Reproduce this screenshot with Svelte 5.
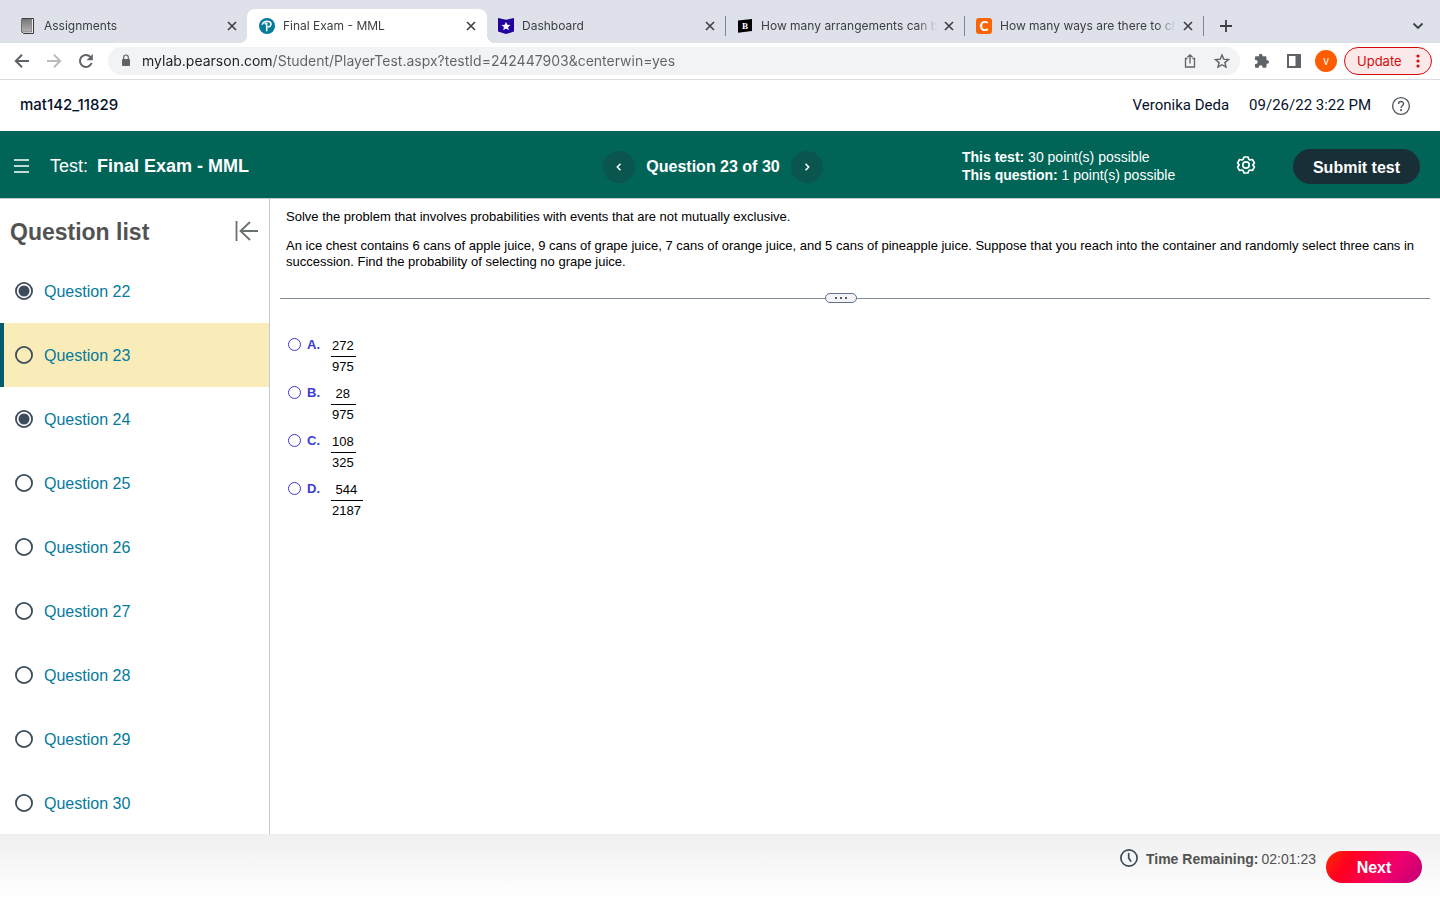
<script>
  const tabs = [
    { title: 'Assignments', icon: 'book' },
    { title: 'Final Exam - MML', icon: 'pearson' },
    { title: 'Dashboard', icon: 'star' },
    { title: 'How many arrangements can b', icon: 'b' },
    { title: 'How many ways are there to ch', icon: 'c' }
  ];
  const activeTab = 1;

  let url = 'mylab.pearson.com/Student/PlayerTest.aspx?testId=242447903&centerwin=yes';

  const questions = [22, 23, 24, 25, 26, 27, 28, 29, 30];
  const answered = [22, 24];
  let current = 23;

  const choices = [
    { letter: 'A', top: '272', bottom: '975' },
    { letter: 'B', top: '28', bottom: '975' },
    { letter: 'C', top: '108', bottom: '325' },
    { letter: 'D', top: '544', bottom: '2187' }
  ];
  let answer = '';

  function prev() {
    if (current > 22) current -= 1;
  }

  function next() {
    if (current < 30) current += 1;
  }
</script>

<div class="page">
  <div class="tabs">
    {#each tabs as tab, i}
      <div class="tab" class:active={i === activeTab} class:line={i > 1}>
        <svg class="favicon" width="16" height="16" viewBox="0 0 16 16">
          {#if tab.icon === 'book'}
            <defs>
              <linearGradient id="cover" x1="0" y1="0" x2="0" y2="1">
                <stop offset="0" stop-color="#777" />
                <stop offset="1" stop-color="#b5b2b0" />
              </linearGradient>
            </defs>
            <path d="M2 .5h11.500v15H3.500L1.500 13.500z" fill="#eee" stroke="#3c3636" />
            <path d="M1.500 1h10v13h-10z" fill="url(#cover)" stroke="#666" stroke-width=".6" />
          {:else if tab.icon === 'pearson'}
            <circle cx="8" cy="8" r="8" fill="#047a9c" />
            <path d="M3 6.800C4.200 4.300 7 3 9.500 3.500c3.600.8 3.300 5.400-.8 5.600M5.700 6.200c1-.7 2-.9 2-.9v7.900" fill="none" stroke="#fff" stroke-width="1.500" />
          {:else if tab.icon === 'star'}
            <path d="M0 0l8 1.800L16 0v13.500L8 16l-8-2.500z" fill="#24009c" />
            <path d="M8 3.800l1.300 2.900 3.200.3-2.400 2.100.7 3.100L8 10.600l-2.800 1.600.7-3.100L3.500 7l3.200-.3z" fill="#fff" />
          {:else if tab.icon === 'b'}
            <path d="M1 2.500L15 1v12L1 14.700z" fill="#000" />
            <text x="8" y="11" text-anchor="middle" font-family="Liberation Serif, serif" font-weight="bold" font-size="9" fill="#fff">B</text>
          {:else}
            <rect width="16" height="16" rx="3" fill="#fb6404" />
            <text x="8" y="12.500" text-anchor="middle" font-family="Lato, sans-serif" font-weight="900" font-size="13" fill="#fff">C</text>
          {/if}
        </svg>
        <a class="title" href="#tab">{tab.title}</a>
        <button class="icon" aria-label="Close tab">
          <svg width="16" height="16" viewBox="0 0 16 16"><path d="M4 4l8 8M12 4l-8 8" stroke="#3c4043" stroke-width="1.600" /></svg>
        </button>
      </div>
    {/each}
    <button class="icon new-tab" aria-label="New tab">
      <svg width="16" height="16" viewBox="0 0 16 16"><path d="M8 2v12M2 8h12" stroke="#3c4043" stroke-width="1.800" /></svg>
    </button>
    <button class="icon tab-search" aria-label="Search tabs">
      <svg width="16" height="16" viewBox="0 0 16 16"><path d="M3.500 5.500L8 10l4.500-4.500" fill="none" stroke="#3c4043" stroke-width="1.800" /></svg>
    </button>
  </div>

  <div class="toolbar">
    <div class="tools">
      <button class="icon" aria-label="Back">
        <svg width="16" height="16" viewBox="0 0 16 16"><path d="M15 8H2.500M8 1.700L1.800 8 8 14.300" fill="none" stroke="#5f6368" stroke-width="2" /></svg>
      </button>
      <button class="icon" aria-label="Forward">
        <svg width="16" height="16" viewBox="0 0 16 16"><path d="M1 8h12.500M8 1.700L14.200 8 8 14.300" fill="none" stroke="#babcbe" stroke-width="2" /></svg>
      </button>
      <button class="icon" aria-label="Reload">
        <svg width="16" height="16" viewBox="0 0 16 16"><path d="M13.600 10A6 6 0 1 1 12.400 3.900" fill="none" stroke="#5f6368" stroke-width="2" /><path d="M14.800 1v6.200H8.600z" fill="#5f6368" /></svg>
      </button>
    </div>
    <div class="omnibox">
      <svg width="12" height="14" viewBox="0 0 12 14"><rect x="2" y="5" width="8" height="7" rx="1" fill="#5f6368" /><path d="M3.700 6V3.300a2.300 2.300 0 0 1 4.600 0V6" fill="none" stroke="#5f6368" stroke-width="1.200" /></svg>
      <input type="text" aria-label="Address" bind:value={url} />
      <button class="icon" aria-label="Share">
        <svg width="16" height="16" viewBox="0 0 16 16" fill="none" stroke="#5f6368" stroke-width="1.300"><path d="M5.500 5.500h-2v8.500h9V5.500h-2M8 10.500V2M5.500 4.300L8 1.800l2.500 2.500" /></svg>
      </button>
      <button class="icon" aria-label="Bookmark">
        <svg width="16" height="16" viewBox="0 0 16 16"><path d="M8 2l1.800 4.200 4.600.4-3.500 3 1.100 4.500L8 11.700l-4 2.400 1.100-4.500-3.500-3 4.600-.4z" fill="none" stroke="#5f6368" stroke-width="1.400" /></svg>
      </button>
    </div>
    <div class="tools">
      <button class="icon" aria-label="Extensions">
        <svg width="16" height="16" viewBox="0 0 16 16"><path d="M13.300 7.300h-.8V4.500c0-.8-.6-1.300-1.300-1.300H8.500v-.6a1.800 1.800 0 0 0-3.600 0v.6H2.200C1.500 3.200 1 3.700 1 4.500v2.400h.7a2 2 0 0 1 0 4H1v2.600c0 .7.500 1.300 1.200 1.300h2.600v-.7a1.900 1.900 0 0 1 3.800 0v.7h2.600c.7 0 1.300-.6 1.300-1.300v-2.700h.8a1.750 1.750 0 0 0 0-3.500z" fill="#5f6368" /></svg>
      </button>
      <button class="icon" aria-label="Side panel">
        <svg width="16" height="16" viewBox="0 0 16 16"><path d="M1 1h14v14H1zM3 3v10h6.500V3z" fill="#5f6368" fill-rule="evenodd" /></svg>
      </button>
    </div>
    <button class="avatar" aria-label="Profile">v</button>
    <button class="update">
      Update
      <svg width="4" height="14" viewBox="0 0 4 14" fill="#d80b0b"><circle cx="2" cy="2" r="1.600" /><circle cx="2" cy="7" r="1.600" /><circle cx="2" cy="12" r="1.600" /></svg>
    </button>
  </div>

  <div class="course">
    <span class="course-name">mat142_11829</span>
    <span>Veronika Deda</span>
    <span>09/26/22 3:22 PM</span>
    <button class="icon" aria-label="Help">
      <svg width="20" height="20" viewBox="0 0 20 20" fill="none" stroke="#54595f" stroke-width="1.400"><circle cx="10" cy="10" r="8.400" /><path d="M7.500 8c0-3.400 5-3.200 5-.3 0 2-2.500 2-2.500 4.300" /><circle cx="10" cy="14.200" r=".4" /></svg>
    </button>
  </div>

  <header>
    <div class="test-name">
      <button class="icon" aria-label="Menu">
        <svg width="16" height="16" viewBox="0 0 16 16"><path d="M0 2h15M0 8h15M0 14h15" stroke="#fff" stroke-width="1.600" /></svg>
      </button>
      <span>Test:</span>
      <strong>Final Exam - MML</strong>
    </div>
    <div class="pager">
      <button class="round" aria-label="Previous question" on:click={prev}>
        <svg width="10" height="10" viewBox="0 0 10 10"><path d="M6.500 1.800L3.300 5l3.200 3.200" fill="none" stroke="#fff" stroke-width="1.500" /></svg>
      </button>
      <strong>Question {current} of 30</strong>
      <button class="round" aria-label="Next question" on:click={next}>
        <svg width="10" height="10" viewBox="0 0 10 10"><path d="M3.500 1.800L6.700 5 3.500 8.200" fill="none" stroke="#fff" stroke-width="1.500" /></svg>
      </button>
    </div>
    <div class="actions">
      <div class="points">
        <div><strong>This test:</strong> 30 point(s) possible</div>
        <div><strong>This question:</strong> 1 point(s) possible</div>
      </div>
      <button class="icon" aria-label="Settings">
        <svg width="20" height="20" viewBox="0 0 20 20" fill="none" stroke="#fff" stroke-width="1.700" stroke-linejoin="round">
          <path d="M8 2h4l.8 2.300 1.200.7 2.400-.5 2 3.400L16.800 10l1.600 2.100-2 3.400L14 15l-1.200.7L12 18H8l-.8-2.300L6 15l-2.400.5-2-3.400L3.200 10 1.600 7.900l2-3.400L6 5l1.200-.7z" />
          <circle cx="10" cy="10" r="3.200" />
        </svg>
      </button>
      <button class="submit">Submit test</button>
    </div>
  </header>

  <main>
    <nav>
      <div class="list-head">
        <h2>Question list</h2>
        <button class="icon" aria-label="Collapse list">
          <svg width="24" height="22" viewBox="0 0 24 22"><path d="M1.500 1v20M23 11H5.500M15 2L5.500 11l9.500 9" fill="none" stroke="#6a7070" stroke-width="1.800" /></svg>
        </button>
      </div>
      {#each questions as q}
        <a class="question" class:selected={q === current} href="#question-{q}" on:click|preventDefault={() => (current = q)}>
          <svg width="18" height="18" viewBox="0 0 18 18">
            <circle cx="9" cy="9" r="8.100" fill="none" stroke="#3d4c5a" stroke-width="1.800" />
            {#if answered.includes(q)}
              <circle cx="9" cy="9" r="5.500" fill="#3d4c5a" />
            {/if}
          </svg>
          <span>Question {q}</span>
        </a>
      {/each}
    </nav>

    <section>
      <p>Solve the problem that involves probabilities with events that are not mutually exclusive.</p>
      <p>An ice chest contains 6 cans of apple juice, 9 cans of grape juice, 7 cans of orange juice, and 5 cans of pineapple juice. Suppose that you reach into the container and randomly select three cans in succession. Find the probability of selecting no grape juice.</p>

      <div class="divider">
        <button aria-label="Resize"><i></i><i></i><i></i></button>
      </div>

      <div class="choices">
        {#each choices as choice}
          <label>
            <input type="radio" name="answer" value={choice.letter} bind:group={answer} />
            <b>{choice.letter}.</b>
            <span class="fraction">
              <span class="top">{choice.top}</span>
              <span>{choice.bottom}</span>
            </span>
          </label>
        {/each}
      </div>
    </section>
  </main>

  <footer>
    <svg width="18" height="18" viewBox="0 0 18 18" fill="none" stroke="#3d4c5a" stroke-width="1.700"><circle cx="9" cy="9" r="8.100" /><path d="M8.700 4.500v4.700l2 2.800" stroke-linecap="round" /></svg>
    <strong>Time Remaining:</strong>
    <span>02:01:23</span>
    <button class="next" on:click={next}>Next</button>
  </footer>
</div>

<style>
  :global(body) {
    margin: 0;
    background: #fff;
  }
  .page {
    display: flex;
    flex-direction: column;
    height: 100vh;
    font-family: "Liberation Sans", Arial, sans-serif;
  }
  button {
    padding: 0;
    border: 0;
    background: none;
    font-family: inherit;
    cursor: pointer;
  }
  svg {
    display: block;
    flex: none;
  }
  .icon {
    flex: none;
  }

  /* browser tabs */
  .tabs {
    display: flex;
    align-items: center;
    height: 43px;
    padding: 0 14px 0 9px;
    background: #dee1e9;
    font-family: Inter, sans-serif;
    flex: none;
  }
  .tab {
    display: flex;
    align-items: center;
    flex: 0 1 239px;
    min-width: 0;
    height: 34px;
    margin-top: 9px;
    padding: 0 8px 0 11px;
    box-sizing: border-box;
  }
  .tab.active {
    position: relative;
    flex-basis: 240px;
    margin-left: -1px;
    padding-left: 12px;
    background: #fff;
    border-radius: 8px 8px 0 0;
  }
  .tab.active::before,
  .tab.active::after {
    content: '';
    position: absolute;
    bottom: 0;
    width: 8px;
    height: 8px;
  }
  .tab.active::before {
    left: -8px;
    background: radial-gradient(circle at 0 0, transparent 8px, #fff 8px);
  }
  .tab.active::after {
    right: -8px;
    background: radial-gradient(circle at 100% 0, transparent 8px, #fff 8px);
  }
  .tab.line {
    background: linear-gradient(#80868b, #80868b) right 7px / 1px 20px no-repeat;
  }
  .title {
    flex: 1;
    min-width: 0;
    margin: 0 4px 0 8px;
    overflow: hidden;
    white-space: nowrap;
    color: #3c4043;
    font-size: 12px;
    line-height: 16px;
    text-decoration: none;
    mask-image: linear-gradient(to left, transparent, #000 20px);
  }
  .new-tab {
    margin: 9px 0 0 14px;
  }
  .tab-search {
    margin: 9px 0 0 auto;
  }

  /* address bar */
  .toolbar {
    display: flex;
    align-items: center;
    padding: 4px 8px 4px 14px;
    border-bottom: 1px solid #dadce0;
    font-family: Inter, sans-serif;
  }
  .tools {
    display: flex;
    gap: 16px;
  }
  .omnibox {
    display: flex;
    align-items: center;
    flex: 1;
    gap: 16px;
    height: 28px;
    margin: 0 14px;
    padding: 0 10px 0 12px;
    border-radius: 14px;
    background: #f1f3f4;
  }
  .omnibox input {
    flex: 1;
    min-width: 0;
    margin-left: -6px;
    margin-right: 16px;
    padding: 0 0 2px;
    border: 0;
    outline: 0;
    font-family: inherit;
    font-size: 14px;
    color: transparent;
    caret-color: #202124;
    /* host name is darker than the path */
    background: linear-gradient(90deg, #202124 130px, #5f6368 130px);
    background-clip: text;
  }
  .avatar {
    width: 22px;
    height: 22px;
    margin-left: 13px;
    border-radius: 50%;
    background: #ff5c00;
    color: #fff;
    font-size: 11px;
    line-height: 20px;
  }
  .update {
    display: flex;
    align-items: center;
    justify-content: space-between;
    width: 88px;
    height: 28px;
    margin-left: 7px;
    padding: 0 11px 0 12px;
    border: 1px solid #d80b0b;
    border-radius: 14px;
    background: #fbe9ea;
    color: #d80b0b;
    font-size: 13px;
  }

  /* course line */
  .course {
    display: flex;
    align-items: center;
    height: 51px;
    padding: 0 29px 0 20px;
    gap: 20px;
    color: #05112a;
    font-family: Roboto, sans-serif;
    font-size: 15px;
    flex: none;
  }
  .course span {
    padding-bottom: 2px;
  }
  .course .course-name {
    margin-right: auto;
    font-family: Inter, sans-serif;
    font-weight: 500;
  }

  /* green bar */
  header {
    display: grid;
    grid-template-columns: 603fr 220px 617fr;
    align-items: center;
    height: 67px;
    border-bottom: 1px solid #c7c7d0;
    background: #006557;
    color: #fff;
    flex: none;
  }
  .test-name {
    display: flex;
    align-items: center;
    padding: 4px 0 0 14px;
    font-size: 18px;
  }
  .test-name .icon {
    margin-bottom: 2px;
  }
  .test-name span {
    margin: 0 9px 0 20px;
  }
  .pager {
    display: flex;
    align-items: center;
    justify-content: space-between;
    padding-top: 4px;
    font-size: 16px;
  }
  .round {
    display: grid;
    place-items: center;
    width: 32px;
    height: 32px;
    border-radius: 50%;
    background: #0a554e;
  }
  .actions {
    display: flex;
    align-items: center;
    justify-content: flex-end;
    padding-right: 20px;
  }
  .points {
    width: 274px;
    padding-top: 3px;
    font-size: 14px;
    line-height: 18px;
  }
  .submit {
    width: 127px;
    height: 35px;
    margin: 4px 0 0 37px;
    padding-top: 2px;
    border-radius: 18px;
    background: #192f38;
    color: #fff;
    font-size: 16px;
    font-weight: bold;
  }

  main {
    display: flex;
    flex: 1;
    min-height: 0;
  }
  nav {
    width: 269px;
    border-right: 1px solid #c7c7d0;
    overflow-y: auto;
    scrollbar-width: none;
    flex: none;
  }
  .list-head {
    display: flex;
    align-items: center;
    justify-content: space-between;
    height: 60px;
    padding: 4px 10px 0 10px;
    box-sizing: border-box;
  }
  h2 {
    margin: 0;
    padding-top: 2px;
    color: #525252;
    font-size: 23px;
  }
  .question {
    display: flex;
    align-items: center;
    gap: 11px;
    height: 64px;
    padding-left: 15px;
    color: #047a9c;
    font-size: 16px;
    text-decoration: none;
  }
  .question span {
    padding-top: 2px;
  }
  .selected {
    padding-left: 11px;
    border-left: 4px solid #005a70;
    background: #f9ecb9;
  }

  section {
    flex: 1;
    min-width: 0;
    padding: 10px 10px 0 10px;
    overflow-y: auto;
    color: #000;
    font-size: 13px;
    line-height: 16px;
  }
  p {
    margin: 0 6px 13px 6px;
  }
  .divider {
    display: flex;
    align-items: center;
    margin-top: 23px;
  }
  .divider::before,
  .divider::after {
    content: '';
    flex: 1 1 0;
    height: 1px;
    background: #7f8b9b;
  }
  .divider::after {
    flex-basis: 28px;
  }
  .divider button {
    display: flex;
    align-items: center;
    justify-content: center;
    gap: 3px;
    width: 32px;
    height: 10px;
    border: 1px solid #5f7184;
    border-radius: 5px;
    background: #f3f4f8;
  }
  .divider i {
    width: 2px;
    height: 2px;
    background: #5a5a5a;
  }
  .choices {
    padding: 33px 8px;
  }
  label {
    display: flex;
    align-items: flex-start;
    width: max-content;
    height: 48px;
  }
  label input {
    appearance: none;
    width: 13px;
    height: 13px;
    margin: 2px 6px 0 0;
    border: 1px solid #3c3cd0;
    border-radius: 50%;
  }
  label input:checked {
    background: radial-gradient(circle, #3c3cd0 3px, transparent 4px);
  }
  label b {
    width: 24px;
    margin-top: 1px;
    color: #3c3cd0;
  }
  .fraction {
    display: flex;
    flex-direction: column;
    text-align: center;
    line-height: 20px;
  }
  .fraction span {
    padding: 0 2px 0 1px;
  }
  .fraction .top {
    border-bottom: 1px solid #000;
  }

  footer {
    display: flex;
    align-items: flex-start;
    height: 49px;
    padding: 17px 18px 0 0;
    justify-content: flex-end;
    background: linear-gradient(#f0f0f0, #fff);
    color: #525252;
    font-size: 14px;
    line-height: 17px;
    flex: none;
  }
  footer svg {
    margin: -2px 8px 0 0;
  }
  footer span {
    margin: 0 10px 0 3px;
  }
  .next {
    width: 96px;
    height: 32px;
    padding-top: 2px;
    border-radius: 16px;
    background: linear-gradient(125deg, #ff2a00, #ff0020 25%, #f2006a 65%, #c2007a);
    color: #fff;
    font-size: 16px;
    font-weight: bold;
  }
</style>
